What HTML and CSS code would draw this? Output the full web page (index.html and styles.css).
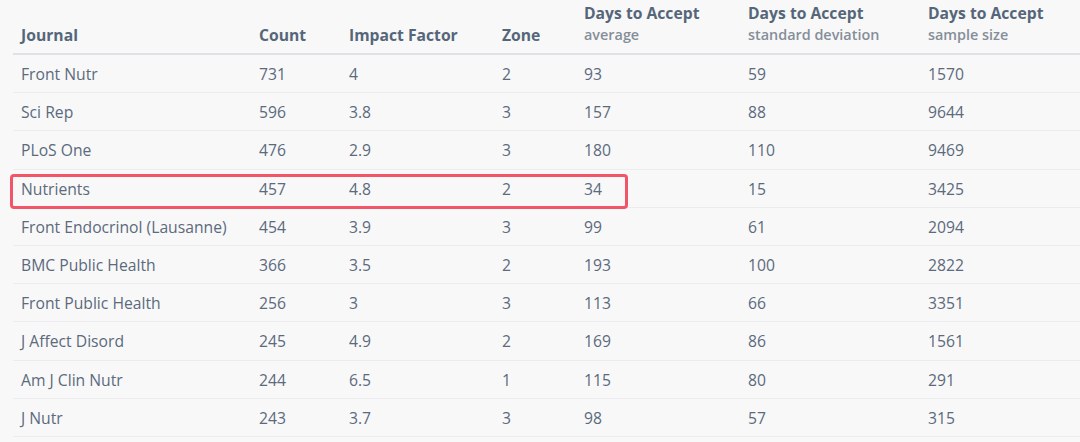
FILE: index.html
```html
<!DOCTYPE html>
<html>
<head>
<meta charset="utf-8">
<link rel="stylesheet" href="styles.css">
</head>
<body>
<div class="wrap">
<table class="jt">
<colgroup>
<col class="c1"><col class="c2"><col class="c3"><col class="c4"><col class="c5"><col class="c6"><col class="c7">
</colgroup>
<thead>
<tr>
<th>Journal</th>
<th>Count</th>
<th>Impact Factor</th>
<th>Zone</th>
<th>Days to Accept<span class="sub">average</span></th>
<th>Days to Accept<span class="sub">standard deviation</span></th>
<th>Days to Accept<span class="sub">sample size</span></th>
</tr>
</thead>
<tbody>
<tr><td>Front Nutr</td><td>731</td><td>4</td><td>2</td><td>93</td><td>59</td><td>1570</td></tr>
<tr><td>Sci Rep</td><td>596</td><td>3.8</td><td>3</td><td>157</td><td>88</td><td>9644</td></tr>
<tr><td>PLoS One</td><td>476</td><td>2.9</td><td>3</td><td>180</td><td>110</td><td>9469</td></tr>
<tr><td>Nutrients</td><td>457</td><td>4.8</td><td>2</td><td>34</td><td>15</td><td>3425</td></tr>
<tr><td>Front Endocrinol (Lausanne)</td><td>454</td><td>3.9</td><td>3</td><td>99</td><td>61</td><td>2094</td></tr>
<tr><td>BMC Public Health</td><td>366</td><td>3.5</td><td>2</td><td>193</td><td>100</td><td>2822</td></tr>
<tr><td>Front Public Health</td><td>256</td><td>3</td><td>3</td><td>113</td><td>66</td><td>3351</td></tr>
<tr><td>J Affect Disord</td><td>245</td><td>4.9</td><td>2</td><td>169</td><td>86</td><td>1561</td></tr>
<tr><td>Am J Clin Nutr</td><td>244</td><td>6.5</td><td>1</td><td>115</td><td>80</td><td>291</td></tr>
<tr><td>J Nutr</td><td>243</td><td>3.7</td><td>3</td><td>98</td><td>57</td><td>315</td></tr>
</tbody>
</table>
<div class="highlight"></div>
</div>
</body>
</html>
```
FILE: styles.css
```css
html, body {
  margin: 0;
  padding: 0;
  background: #f8f8f8;
}
body {
  font-family: "Open Sans", "Noto Sans", sans-serif;
  color: #5b6a7d;
  overflow: hidden;
}
.wrap {
  position: relative;
  margin-left: 13px;
  width: 1067px;
}
.jt {
  width: 1067px;
  table-layout: fixed;
  border-collapse: collapse;
  font-size: 15.7px;
}
.c1 { width: 238px; }
.c2 { width: 90px; }
.c3 { width: 153px; }
.c4 { width: 82px; }
.c5 { width: 164px; }
.c6 { width: 180px; }
.c7 { width: 160px; }
.jt th {
  text-align: left;
  vertical-align: bottom;
  font-weight: 700;
  color: #56667a;
  padding: 2px 8px 7px;
  line-height: 22px;
  border-bottom: 2px solid #dfe1e4;
  height: 44px;
}
.jt th .sub {
  display: block;
  font-weight: 600;
  font-size: 14.4px;
  color: #858e98;
}
.jt td {
  padding: 9px 8px 7px;
  line-height: 21.2px;
  border-bottom: 1px solid #ececee;
}
.highlight {
  position: absolute;
  left: -3px;
  top: 174px;
  width: 612px;
  height: 29px;
  border: 3px solid #f2556a;
  border-radius: 4px;
}
```
